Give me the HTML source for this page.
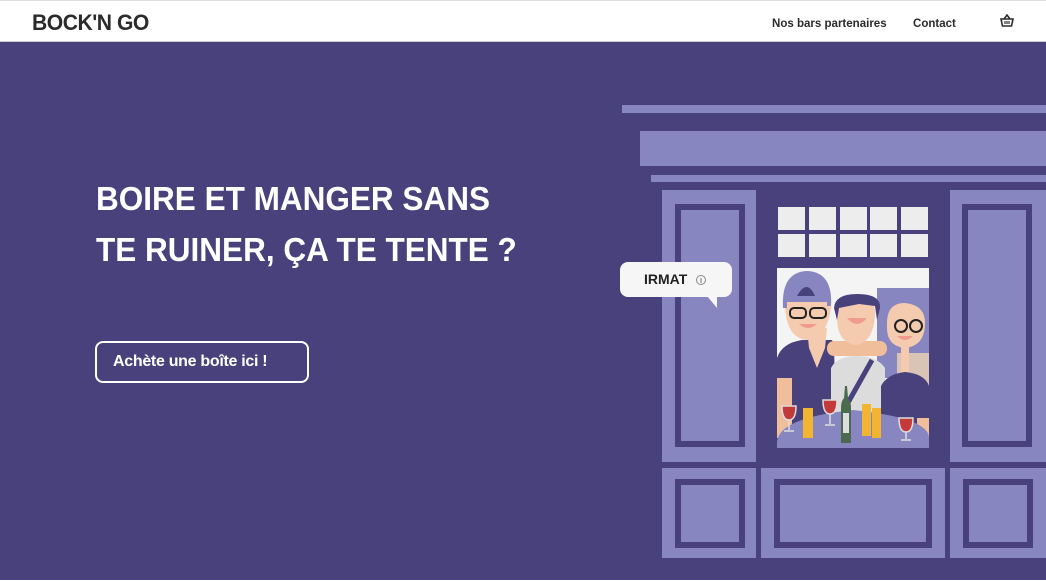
<!DOCTYPE html>
<html><head><meta charset="utf-8"><style>
*{margin:0;padding:0;box-sizing:border-box}
body{width:1046px;height:581px;overflow:hidden;background:#fff;font-family:"Liberation Sans",sans-serif;position:relative}
.hdr{position:absolute;left:0;top:0;width:1046px;height:42px;background:#fff;border-top:1px solid #ddd;border-bottom:1px solid #ccc}
.logo{position:absolute;left:32px;top:9px;font-size:22px;font-weight:bold;color:#2b2b2b;letter-spacing:-0.5px;transform:scaleX(0.96);transform-origin:left}
.nav{position:absolute;top:15px;font-size:12px;font-weight:bold;color:#2b2b2b;transform:scaleX(0.96);transform-origin:left}
.hero{position:absolute;left:0;top:42px;width:1046px;height:538px;background:#48417c}
.h1{position:absolute;left:96px;top:173px;color:#fff;font-weight:bold;font-size:33px;line-height:51px;transform:scaleX(0.955);transform-origin:left;white-space:nowrap}
.btn{position:absolute;left:95px;top:341px;width:214px;height:42px;border:2px solid #fff;border-radius:8px;color:#fff;font-weight:bold;font-size:16px;padding:10px 0 0 16px;letter-spacing:-0.3px}
.l{position:absolute;background:#8886c0}
.d{position:absolute;background:#48417c}
.pane{position:absolute;width:27px;height:23px;background:#ededed}
</style></head><body>
<div class="hdr">
<div class="logo">BOCK'N GO</div>
<div class="nav" style="left:772px">Nos bars partenaires</div>
<div class="nav" style="left:913px">Contact</div>
<svg style="position:absolute;left:1000px;top:13px" width="14" height="13" viewBox="0 0 14 13"><path d="M1 5h12l-1.5 7h-9z M4 5l3-4l3 4" fill="none" stroke="#2b2b2b" stroke-width="1.6"/><path d="M5 7v3M7 7v3M9 7v3" stroke="#2b2b2b" stroke-width="1.2"/></svg>
</div>
<div class="hero"></div>
<div class="h1">BOIRE ET MANGER SANS<br>TE RUINER, ÇA TE TENTE ?</div>
<div class="btn">Achète une boîte ici !</div>

<div class="l" style="left:622px;top:105px;width:424px;height:8px"></div>
<div class="l" style="left:640px;top:131px;width:406px;height:35px"></div>
<div class="l" style="left:651px;top:175px;width:395px;height:7px"></div>
<div class="l" style="left:662px;top:190px;width:94px;height:272px"></div>
<div class="d" style="left:675px;top:204px;width:70px;height:243px"></div>
<div class="l" style="left:681px;top:210px;width:58px;height:231px"></div>
<div class="l" style="left:950px;top:190px;width:96px;height:272px"></div>
<div class="d" style="left:962px;top:204px;width:70px;height:243px"></div>
<div class="l" style="left:968px;top:210px;width:58px;height:231px"></div>
<div class="l" style="left:662px;top:468px;width:94px;height:90px"></div>
<div class="d" style="left:675px;top:479px;width:70px;height:69px"></div>
<div class="l" style="left:681px;top:485px;width:58px;height:57px"></div>
<div class="l" style="left:761px;top:468px;width:184px;height:90px"></div>
<div class="d" style="left:774px;top:479px;width:158px;height:69px"></div>
<div class="l" style="left:780px;top:485px;width:146px;height:57px"></div>
<div class="l" style="left:950px;top:468px;width:96px;height:90px"></div>
<div class="d" style="left:963px;top:479px;width:70px;height:69px"></div>
<div class="l" style="left:969px;top:485px;width:58px;height:57px"></div>
<div class="pane" style="left:778px;top:207px"></div><div class="pane" style="left:809px;top:207px"></div><div class="pane" style="left:840px;top:207px"></div><div class="pane" style="left:870px;top:207px"></div><div class="pane" style="left:901px;top:207px"></div>
<div class="pane" style="left:778px;top:234px"></div><div class="pane" style="left:809px;top:234px"></div><div class="pane" style="left:840px;top:234px"></div><div class="pane" style="left:870px;top:234px"></div><div class="pane" style="left:901px;top:234px"></div>
<svg style="position:absolute;left:777px;top:268px" width="152" height="180" viewBox="0 0 152 180">
<rect width="152" height="180" fill="#f4f4f4"/>
<rect x="100" y="20" width="52" height="90" fill="#8886c0"/>
<rect x="120" y="85" width="32" height="40" fill="#d9c4b6"/>
<path d="M0 90 Q5 75 25 72 L55 72 Q60 80 55 180 L0 180z" fill="#48417c"/>
<rect x="0" y="110" width="15" height="60" fill="#f0be9a"/>
<path d="M30 60 L50 60 L48 80 L40 100 L32 80z" fill="#f5cbb0"/>
<path d="M54 100 Q60 88 80 88 Q100 88 108 100 L108 180 L54 180z" fill="#dcdcdc"/>
<path d="M95 92 L68 140" stroke="#48417c" stroke-width="5"/>
<rect x="50" y="73" width="60" height="15" rx="7" fill="#f0be9a"/>
<path d="M8 35 Q8 5 30 3 Q52 5 54 35 L54 40 Q50 70 30 72 Q10 70 8 40z" fill="#f5cbb0"/>
<path d="M6 40 Q4 4 30 3 Q56 4 54 38 L50 38 L50 34 L10 34 L10 40z" fill="#8886c0"/>
<path d="M20 28 Q30 10 38 28z" fill="#48417c"/>
<rect x="13" y="40" width="16" height="10" rx="4" fill="none" stroke="#222" stroke-width="2"/>
<rect x="33" y="40" width="16" height="10" rx="4" fill="none" stroke="#222" stroke-width="2"/>
<path d="M22 56 Q31 64 40 56z" fill="#ef9c8c"/>
<path d="M60 40 Q60 28 80 26 Q98 28 98 45 Q97 75 78 77 Q60 74 60 50z" fill="#f5cbb0"/>
<path d="M57 40 Q58 26 80 26 Q104 26 103 40 L100 52 L98 38 L82 36 L62 40 L60 52z" fill="#48417c"/>
<path d="M70 50 Q80 62 90 50z" fill="#ef9c8c"/>
<path d="M104 118 Q110 106 128 104 Q148 106 152 118 L152 180 L104 180z" fill="#48417c"/>
<rect x="140" y="150" width="12" height="30" fill="#f0be9a"/>
<path d="M110 55 Q110 35 128 35 Q148 37 148 55 Q148 78 128 80 Q110 78 110 60z" fill="#f5cbb0"/>
<rect x="124" y="78" width="8" height="26" fill="#f5cbb0"/>
<circle cx="124" cy="58" r="6" fill="none" stroke="#222" stroke-width="2"/>
<circle cx="139" cy="58" r="6" fill="none" stroke="#222" stroke-width="2"/>
<path d="M120 68 Q128 76 136 68z" fill="#ef9c8c"/>
<path d="M0 175 Q0 150 76 142 Q152 150 152 170 L152 180 L0 180z" fill="#8886c0"/>
<path d="M5 138 h14 q0 14 -7 14 q-7 0 -7 -14z M12 152v10 M7 163h10" fill="#c23a3a" stroke="#ddd" stroke-width="1.5"/>
<rect x="26" y="140" width="10" height="30" fill="#f2b531"/>
<path d="M46 132 h14 q0 14 -7 14 q-7 0 -7 -14z M53 146v10 M48 157h10" fill="#c23a3a" stroke="#ddd" stroke-width="1.5"/>
<path d="M67 130 L68 118 L70 118 L71 130 Q74 133 74 140 L74 175 L64 175 L64 140 Q64 133 67 130z" fill="#4c6a50"/>
<rect x="66" y="145" width="6" height="20" fill="#ddd"/>
<rect x="85" y="136" width="9" height="32" fill="#f2b531"/>
<rect x="95" y="140" width="9" height="30" fill="#f2b531"/>
<path d="M122 150 h14 q0 14 -7 14 q-7 0 -7 -14z M129 164v7 M124 172h10" fill="#c23a3a" stroke="#ddd" stroke-width="1.5"/>
</svg>
<svg style="position:absolute;left:619px;top:261px" width="116" height="50" viewBox="0 0 116 50">
<rect x="1" y="1" width="112" height="35" rx="8" fill="#f6f6f6"/>
<path d="M88 35 L98 47 L98 35z" fill="#f6f6f6"/>
<text x="25" y="23" font-family="Liberation Sans,sans-serif" font-weight="bold" font-size="14" fill="#222">IRMAT</text>
<circle cx="82" cy="19" r="4.5" fill="none" stroke="#888" stroke-width="1"/>
<path d="M82 17v5" stroke="#888" stroke-width="1.2"/>
</svg>
</body></html>
